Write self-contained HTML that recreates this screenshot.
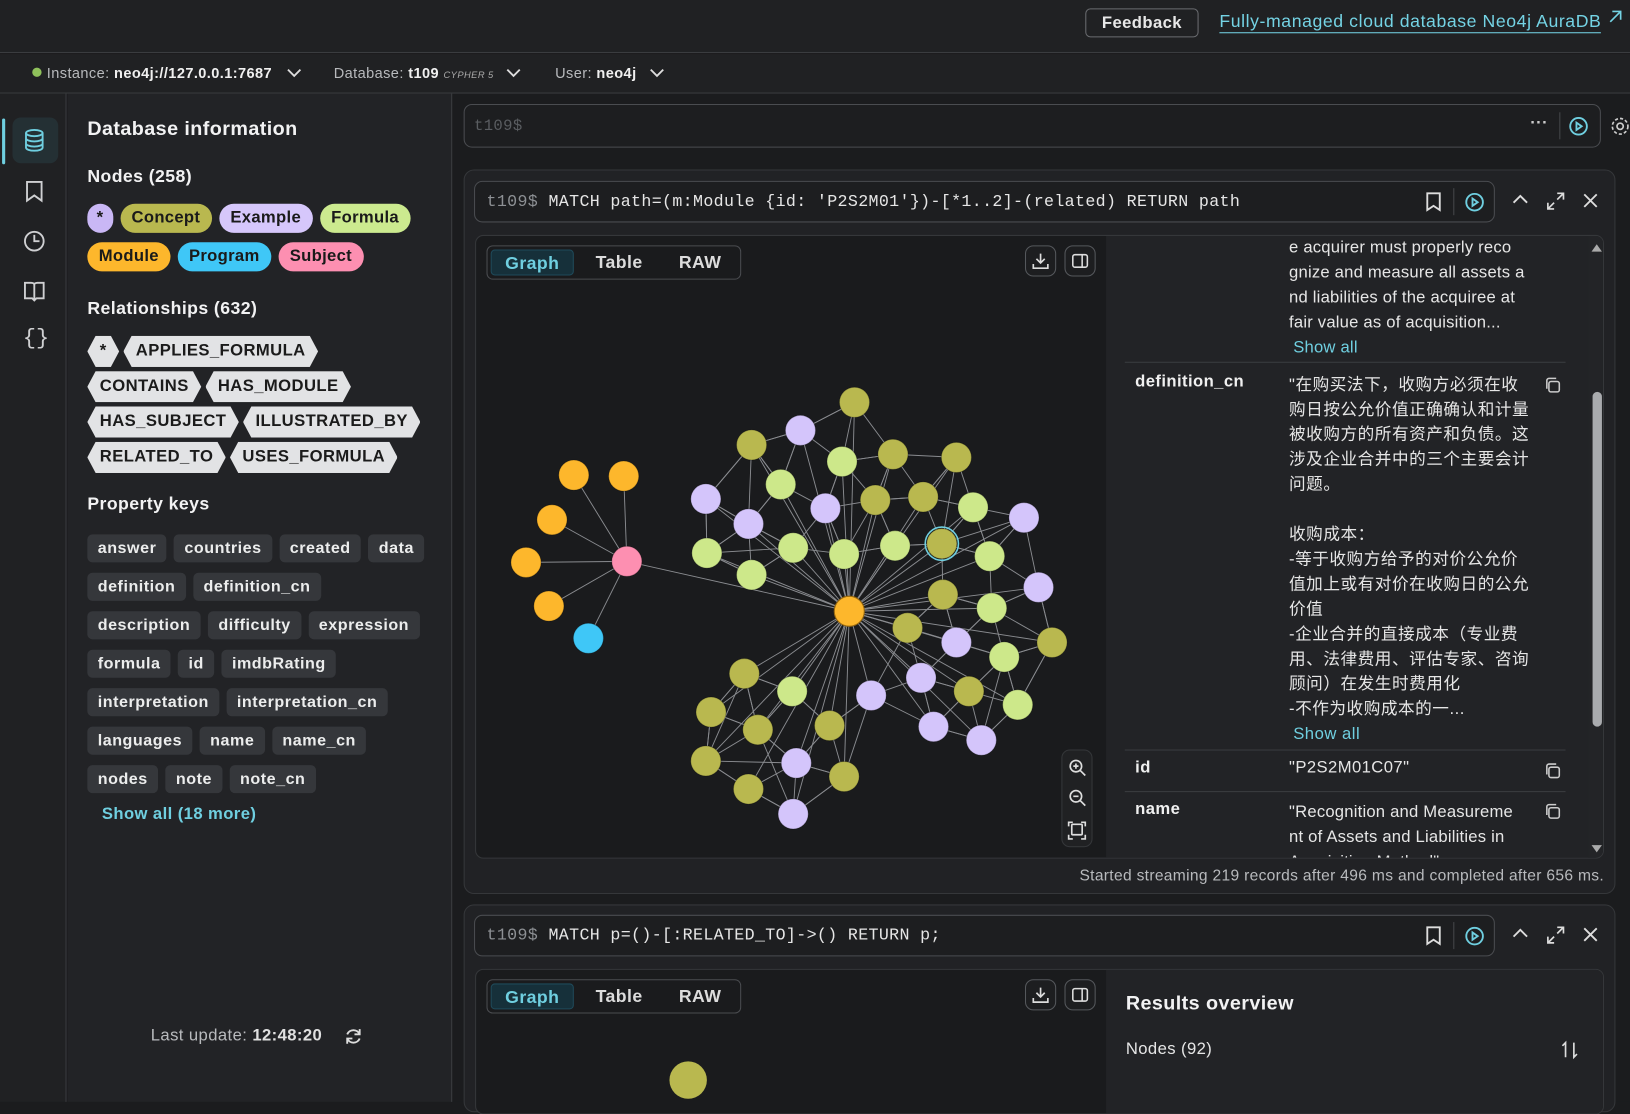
<!DOCTYPE html>
<html><head><meta charset="utf-8"><style>
*{box-sizing:border-box;margin:0;padding:0}
html,body{width:1630px;height:1072px;overflow:hidden;background:#1b1c1e}
#w{position:absolute;left:0;top:0;width:1568px;height:1060px;transform:scale(1.03954);transform-origin:0 0;font-family:"Liberation Sans","Noto Sans CJK SC",sans-serif;color:#e8e9ea;background:#1b1c1e;letter-spacing:0.4px}
.a{position:absolute}
.top{left:0;top:0;width:1568px;height:51px;background:#202123;border-bottom:1px solid #3a3c3f}
.bar2{left:0;top:52px;width:1568px;height:38px;background:#202123;border-bottom:1px solid #3a3c3f;font-size:14px;color:#b8babd}
.bar2 b{color:#f0f0f0;font-weight:bold}
.side{left:0;top:90px;width:64px;height:970px;background:#202123;border-right:1px solid #3a3c3f}
.panel{left:65px;top:90px;width:370px;height:970px;background:#222326;border-right:1px solid #3a3c3f}
.h{font-weight:bold;font-size:17px;color:#f2f2f3}
.lbl{display:inline-block;border-radius:14px;font-weight:bold;font-size:16px;color:#1a1a1a;height:28px;line-height:28px;padding:0 11px;margin:0 7px 9px 0;letter-spacing:0.3px}
.rel{display:inline-block;background:#e2e3e5;color:#1b1b1b;font-weight:bold;font-size:16px;height:30px;line-height:30px;padding:0 12px;margin:0 4px 4px 0;letter-spacing:0.4px;clip-path:polygon(8px 0,calc(100% - 8px) 0,100% 50%,calc(100% - 8px) 100%,8px 100%,0 50%)}
.pk{display:inline-block;background:#35373b;color:#eceded;font-weight:bold;font-size:15.5px;height:27px;line-height:27px;padding:0 10px;border-radius:5px;margin:0 7px 10px 0;letter-spacing:0.5px}
.card{background:#212225;border:1px solid #35373a;border-radius:10px}
.q{background:#1d1e20;border:1px solid #4a4c50;border-radius:8px;font-family:"Liberation Mono",monospace;font-size:16px;color:#e6e6e6;letter-spacing:0.33px}
.q span{color:#8d9094}
.res{border:1px solid #35373a;border-radius:8px;background:#1a1b1d;overflow:hidden}
.tabs{border:1px solid #4a4c50;border-radius:6px;height:33px;font-weight:bold;font-size:17px;color:#dcdcdc}
.tabs div{position:absolute;top:3px;height:25px;line-height:25px}
.ib{border:1px solid #55585c;border-radius:8px;width:30px;height:30px;background:#1d1e20}
.props{background:#222326;font-size:16px;color:#e6e6e6}
.k{font-weight:bold;color:#f0f0f0}
.cp{width:18px;height:18px}
.cy{color:#6fcfe0}
svg{overflow:visible}
</style></head><body><div id="w">
<div class="a top"></div>
<div class="a" style="left:1044px;top:8px;width:109px;height:28px;border:1px solid #6a6c70;border-radius:5px;text-align:center;line-height:27px;font-weight:bold;font-size:16px;color:#e8e8e8">Feedback</div>
<div class="a" style="left:1173px;top:10px;font-size:17px;color:#74d3e4;border-bottom:1.5px solid #74d3e4;line-height:21px;letter-spacing:0.55px">Fully-managed cloud database Neo4j AuraDB</div>
<svg class="a" style="left:1547px;top:9px" width="14" height="14"><path d="M2 12L12 2M4 2h8v8" stroke="#74d3e4" stroke-width="1.6" fill="none"/></svg>
<div class="a bar2">
 <div class="a" style="left:31px;top:13px;width:9px;height:9px;border-radius:50%;background:#8fc15b"></div>
 <div class="a" style="left:45px;top:10px">Instance: <b>neo4j://127.0.0.1:7687</b></div>
 <svg class="a" style="left:276px;top:13px" width="14" height="10"><path d="M1 2l6 6 6-6" stroke="#ddd" stroke-width="1.8" fill="none"/></svg>
 <div class="a" style="left:321px;top:10px">Database: <b>t109</b> <i style="font-size:9px;color:#aaa">CYPHER 5</i></div>
 <svg class="a" style="left:487px;top:13px" width="14" height="10"><path d="M1 2l6 6 6-6" stroke="#ddd" stroke-width="1.8" fill="none"/></svg>
 <div class="a" style="left:534px;top:10px">User: <b>neo4j</b></div>
 <svg class="a" style="left:625px;top:13px" width="14" height="10"><path d="M1 2l6 6 6-6" stroke="#ddd" stroke-width="1.8" fill="none"/></svg>
</div>
<div class="a side">
 <div class="a" style="left:2px;top:24px;width:3px;height:44px;background:#6fcfe0;border-radius:2px"></div>
 <div class="a" style="left:12px;top:23px;width:44px;height:44px;background:#243034;border-radius:8px"></div>
 <svg class="a" style="left:21px;top:33px" width="24" height="24" fill="none" stroke="#6fcfe0" stroke-width="1.8"><ellipse cx="12" cy="5" rx="8" ry="3"/><path d="M4 5v14c0 1.7 3.6 3 8 3s8-1.3 8-3V5M4 10c0 1.7 3.6 3 8 3s8-1.3 8-3M4 15c0 1.7 3.6 3 8 3s8-1.3 8-3"/></svg>
 <svg class="a" style="left:23px;top:83px" width="20" height="22" fill="none" stroke="#cfd0d2" stroke-width="1.8"><path d="M3 2h14v18l-7-5-7 5z"/></svg>
 <svg class="a" style="left:22px;top:131px" width="22" height="22" fill="none" stroke="#cfd0d2" stroke-width="1.8"><circle cx="11" cy="11" r="9"/><path d="M11 5v6h5"/></svg>
 <svg class="a" style="left:22px;top:180px" width="22" height="20" fill="none" stroke="#cfd0d2" stroke-width="1.8"><path d="M11 4v15M2 2h6c2 0 3 1 3 2 0-1 1-2 3-2h6v15h-7l-2 2-2-2H2z"/></svg>
 <div class="a" style="left:22px;top:225px;font-size:21px;color:#cfd0d2;font-family:'Liberation Mono',monospace;letter-spacing:0">{}</div>
</div>
<div class="a panel">
 <div class="a h" style="left:19px;top:24px;font-size:19px">Database information</div>
 <div class="a h" style="left:19px;top:70px">Nodes (258)</div>
 <div class="a" style="left:19px;top:106px;width:345px">
  <span class="lbl" style="background:#c9b7f5;padding:0 9px">*</span><span class="lbl" style="background:#b9b84f">Concept</span><span class="lbl" style="background:#d6c7fb">Example</span><span class="lbl" style="background:#ccea8f">Formula</span><br>
  <span class="lbl" style="background:#fdb72c">Module</span><span class="lbl" style="background:#3fc7f7">Program</span><span class="lbl" style="background:#fd8fb1">Subject</span>
 </div>
 <div class="a h" style="left:19px;top:197px">Relationships (632)</div>
 <div class="a" style="left:19px;top:233px;width:345px">
  <span class="rel">*</span><span class="rel">APPLIES_FORMULA</span><br><span class="rel">CONTAINS</span><span class="rel">HAS_MODULE</span><br><span class="rel">HAS_SUBJECT</span><span class="rel">ILLUSTRATED_BY</span><br><span class="rel">RELATED_TO</span><span class="rel">USES_FORMULA</span>
 </div>
 <div class="a h" style="left:19px;top:385px">Property keys</div>
 <div class="a" style="left:19px;top:424px;width:350px;white-space:nowrap">
  <span class="pk">answer</span><span class="pk">countries</span><span class="pk">created</span><span class="pk">data</span><br><span class="pk">definition</span><span class="pk">definition_cn</span><br><span class="pk">description</span><span class="pk">difficulty</span><span class="pk">expression</span><br><span class="pk">formula</span><span class="pk">id</span><span class="pk">imdbRating</span><br><span class="pk">interpretation</span><span class="pk">interpretation_cn</span><br><span class="pk">languages</span><span class="pk">name</span><span class="pk">name_cn</span><br><span class="pk">nodes</span><span class="pk">note</span><span class="pk">note_cn</span>
 </div>
 <div class="a cy" style="left:33px;top:685px;font-weight:bold;font-size:16px">Show all (18 more)</div>
 <div class="a" style="left:80px;top:898px;font-size:16px;color:#b8babd">Last update: <b style="color:#e0e0e0">12:48:20</b></div>
 <svg class="a" style="left:266px;top:898px" width="18" height="18" fill="none" stroke="#ddd" stroke-width="1.8"><path d="M15 7a6.5 6.5 0 0 0-12 0M3 11a6.5 6.5 0 0 0 12 0M15 2v5h-5M3 16v-5h5"/></svg>
</div>
<div class="a q" style="left:446px;top:100px;width:1094px;height:42px"><span class="a" style="left:9px;top:12px;color:#5a5d61;font-size:15px">t109$</span></div>
<div class="a" style="left:1472px;top:110px;color:#ccc;font-weight:bold">···</div>
<div class="a" style="left:1500px;top:108px;width:1px;height:26px;background:#45474b"></div>
<svg class="a" style="left:1509px;top:112px" width="19" height="19" fill="none" stroke="#6fcfe0" stroke-width="1.8"><circle cx="9.5" cy="9.5" r="8"/><path d="M7.5 6v7l5-3.5z"/></svg>
<svg class="a" style="left:1549px;top:112px" width="19" height="19" fill="none" stroke="#ccc" stroke-width="1.6"><circle cx="9.5" cy="9.5" r="3"/><circle cx="9.5" cy="9.5" r="7.5" stroke-dasharray="3 2"/></svg>
<div class="a card" style="left:446px;top:163px;width:1108px;height:697px"></div>
<div class="a q" style="left:456px;top:174px;width:982px;height:40px"><div class="a" style="left:11px;top:10px;white-space:pre"><span>t109$</span> MATCH path=(m:Module {id: 'P2S2M01'})-[*1..2]-(related) RETURN path</div></div>
<svg class="a" style="left:1371px;top:185px" width="16" height="18" fill="none" stroke="#ddd" stroke-width="1.8"><path d="M2 1h12v16l-6-4-6 4z"/></svg>
<div class="a" style="left:1398px;top:181px;width:1px;height:26px;background:#45474b"></div>
<svg class="a" style="left:1409px;top:185px" width="19" height="19" fill="none" stroke="#6fcfe0" stroke-width="1.8"><circle cx="9.5" cy="9.5" r="8"/><path d="M7.5 6v7l5-3.5z"/></svg>
<svg class="a" style="left:1455px;top:187px" width="15" height="10" fill="none" stroke="#ddd" stroke-width="1.8"><path d="M1 8l6.5-6.5L14 8"/></svg>
<svg class="a" style="left:1488px;top:185px" width="17" height="17" fill="none" stroke="#ddd" stroke-width="1.6"><path d="M10 1h6v6M16 1l-6 6M7 16H1v-6M1 16l6-6"/></svg>
<svg class="a" style="left:1523px;top:186px" width="14" height="14" fill="none" stroke="#ddd" stroke-width="1.8"><path d="M1 1l12 12M13 1L1 13"/></svg>
<div class="a res" style="left:457px;top:226px;width:1086px;height:600px">
 <div class="a props" style="left:606px;top:0;width:480px;height:600px">
  <div class="a" style="left:176px;top:0;width:260px;line-height:24px;letter-spacing:0.2px">e acquirer must properly reco<br>gnize and measure all assets a<br>nd liabilities of the acquiree at<br>fair value as of acquisition...<br><span class="cy" style="margin-left:4px">Show all</span></div>
  <div class="a" style="left:18px;top:121px;width:424px;height:1px;background:#3a3c40"></div>
  <div class="a k" style="left:28px;top:132px">definition_cn</div>
  <div class="a" style="left:176px;top:132px;width:240px;line-height:24px;font-size:16px;letter-spacing:0.5px">"在购买法下，收购方必须在收<br>购日按公允价值正确确认和计量<br>被收购方的所有资产和负债。这<br>涉及企业合并中的三个主要会计<br>问题。<br><br>收购成本：<br>-等于收购方给予的对价公允价<br>值加上或有对价在收购日的公允<br>价值<br>-企业合并的直接成本（专业费<br>用、法律费用、评估专家、咨询<br>顾问）在发生时费用化<br>-不作为收购成本的一...<br><span class="cy" style="margin-left:4px">Show all</span></div>
  <svg class="a cp" style="left:421px;top:135px" fill="none" stroke="#ccc" stroke-width="1.5"><rect x="5" y="5" width="10" height="10" rx="2"/><path d="M3 12V4c0-1 1-2 2-2h7"/></svg>
  <div class="a" style="left:18px;top:494px;width:424px;height:1px;background:#3a3c40"></div>
  <div class="a k" style="left:28px;top:503px">id</div>
  <div class="a" style="left:176px;top:503px">"P2S2M01C07"</div>
  <svg class="a cp" style="left:421px;top:506px" fill="none" stroke="#ccc" stroke-width="1.5"><rect x="5" y="5" width="10" height="10" rx="2"/><path d="M3 12V4c0-1 1-2 2-2h7"/></svg>
  <div class="a" style="left:18px;top:534px;width:424px;height:1px;background:#3a3c40"></div>
  <div class="a k" style="left:28px;top:543px">name</div>
  <div class="a" style="left:176px;top:543px;width:260px;line-height:24px;letter-spacing:0.2px">"Recognition and Measureme<br>nt of Assets and Liabilities in<br>Acquisition Method"</div>
  <svg class="a cp" style="left:421px;top:545px" fill="none" stroke="#ccc" stroke-width="1.5"><rect x="5" y="5" width="10" height="10" rx="2"/><path d="M3 12V4c0-1 1-2 2-2h7"/></svg>
  <div class="a" style="left:464px;top:0;width:16px;height:600px;background:#232427"></div>
  <div class="a" style="left:467px;top:8px;width:0;height:0;border-left:5px solid transparent;border-right:5px solid transparent;border-bottom:7px solid #aaa"></div>
  <div class="a" style="left:467px;top:586px;width:0;height:0;border-left:5px solid transparent;border-right:5px solid transparent;border-top:7px solid #aaa"></div>
  <div class="a" style="left:468px;top:150px;width:9px;height:322px;background:#a9abae;border-radius:5px"></div>
 </div>
 <div class="a tabs" style="left:10px;top:9px;width:245px"><div style="left:3px;width:80px;background:#16303a;border:1px solid #1f4a5a;border-radius:4px;color:#6fcfe0;text-align:center">Graph</div><div style="left:104px">Table</div><div style="left:184px">RAW</div></div>
 <div class="a ib" style="left:528px;top:9px"></div>
 <svg class="a" style="left:535px;top:16px" width="16" height="16" fill="none" stroke="#ddd" stroke-width="1.6"><path d="M8 1v9M4 6l4 4 4-4M1 11v4h14v-4"/></svg>
 <div class="a ib" style="left:566px;top:9px"></div>
 <svg class="a" style="left:573px;top:17px" width="16" height="14" fill="none" stroke="#ddd" stroke-width="1.5"><rect x="1" y="1" width="14" height="12" rx="2"/><path d="M10 1v12"/></svg>
 <div class="a" style="left:563px;top:494px;width:30px;height:94px;background:#202123;border:1px solid #35373a;border-radius:8px"></div>
 <svg class="a" style="left:570px;top:503px" width="18" height="78" fill="none" stroke="#ddd" stroke-width="1.6"><circle cx="7" cy="7" r="5.5"/><path d="M11 11l5 5M4.5 7h5M7 4.5v5"/><circle cx="7" cy="36" r="5.5"/><path d="M11 40l5 5M4.5 36h5"/><rect x="3" y="63" width="10" height="10" rx="1"/><path d="M0 65v-4h4M12 61h4v4M16 73v4h-4M4 77H0v-4"/></svg>
</div>
<svg id="g" class="a" style="left:0;top:0" width="1568" height="1032"></svg>
<div class="a" style="left:900px;width:643px;text-align:right;top:834px;font-size:15px;color:#b8babd;letter-spacing:0.3px">Started streaming 219 records after 496 ms and completed after 656 ms.</div>
<div class="a card" style="left:446px;top:870px;width:1108px;height:200px"></div>
<div class="a q" style="left:456px;top:880px;width:982px;height:40px"><div class="a" style="left:11px;top:10px;white-space:pre"><span>t109$</span> MATCH p=()-[:RELATED_TO]-&gt;() RETURN p;</div></div>
<svg class="a" style="left:1371px;top:891px" width="16" height="18" fill="none" stroke="#ddd" stroke-width="1.8"><path d="M2 1h12v16l-6-4-6 4z"/></svg>
<div class="a" style="left:1398px;top:887px;width:1px;height:26px;background:#45474b"></div>
<svg class="a" style="left:1409px;top:891px" width="19" height="19" fill="none" stroke="#6fcfe0" stroke-width="1.8"><circle cx="9.5" cy="9.5" r="8"/><path d="M7.5 6v7l5-3.5z"/></svg>
<svg class="a" style="left:1455px;top:893px" width="15" height="10" fill="none" stroke="#ddd" stroke-width="1.8"><path d="M1 8l6.5-6.5L14 8"/></svg>
<svg class="a" style="left:1488px;top:891px" width="17" height="17" fill="none" stroke="#ddd" stroke-width="1.6"><path d="M10 1h6v6M16 1l-6 6M7 16H1v-6M1 16l6-6"/></svg>
<svg class="a" style="left:1523px;top:892px" width="14" height="14" fill="none" stroke="#ddd" stroke-width="1.8"><path d="M1 1l12 12M13 1L1 13"/></svg>
<div class="a res" style="left:457px;top:932px;width:1086px;height:140px">
 <div class="a props" style="left:606px;top:0;width:480px;height:140px">
  <div class="a" style="left:19px;top:22px;font-weight:bold;font-size:19px;color:#f2f2f3">Results overview</div>
  <div class="a" style="left:19px;top:68px;font-size:16px">Nodes (92)</div>
  <svg class="a" style="left:437px;top:68px" width="18" height="18" fill="none" stroke="#ddd" stroke-width="1.6"><path d="M5 16V2L2 5M13 2v14l3-3"/></svg>
 </div>
 <div class="a tabs" style="left:10px;top:9px;width:245px"><div style="left:3px;width:80px;background:#16303a;border:1px solid #1f4a5a;border-radius:4px;color:#6fcfe0;text-align:center">Graph</div><div style="left:104px">Table</div><div style="left:184px">RAW</div></div>
 <div class="a ib" style="left:528px;top:9px"></div>
 <svg class="a" style="left:535px;top:16px" width="16" height="16" fill="none" stroke="#ddd" stroke-width="1.6"><path d="M8 1v9M4 6l4 4 4-4M1 11v4h14v-4"/></svg>
 <div class="a ib" style="left:566px;top:9px"></div>
 <svg class="a" style="left:573px;top:17px" width="16" height="14" fill="none" stroke="#ddd" stroke-width="1.5"><rect x="1" y="1" width="14" height="12" rx="2"/><path d="M10 1v12"/></svg>
 <div class="a" style="left:186px;top:88px;width:36px;height:36px;border-radius:50%;background:#b9b84f"></div>
</div>
<script>
var O='#fdb72c',C='#b9b84f',F='#cde88a',E='#d4c5fb';
var L=[[552,457,O],[600,458,O],[531,500,O],[506,541,O],[528,583,O],[566,614,'#3fc7f7']];
var P=[603,540,'#fd8fb1'],Z=[817,588,O];
var N=[[822,387,C],[723,428,C],[859,437,C],[920,440,C],[842,481,C],[888,478,C],[906,523,C],[907,572,C],[873,604,C],[1012,618,C],[932,665,C],[716,648,C],[684,685,C],[729,702,C],[798,698,C],[679,732,C],[720,759,C],[812,747,C],
[810,444,F],[751,466,F],[936,488,F],[680,532,F],[763,527,F],[812,533,F],[861,525,F],[952,535,F],[723,553,F],[954,585,F],[966,632,F],[979,678,F],[762,665,F],
[770,414,E],[679,480,E],[720,504,E],[794,489,E],[985,498,E],[999,565,E],[920,618,E],[886,652,E],[838,669,E],[898,699,E],[944,712,E],[766,734,E],[763,783,E]];
var s='';function ln(a,b){s+='<line x1="'+a[0]+'" y1="'+a[1]+'" x2="'+b[0]+'" y2="'+b[1]+'" stroke="#8a8c90" stroke-width="0.9"/>';}
L.forEach(function(n){ln(P,n)});ln(P,Z);
N.forEach(function(n,i){ln(Z,n);var d=N.map(function(m,j){return [Math.hypot(m[0]-n[0],m[1]-n[1]),j]}).sort(function(a,b){return a[0]-b[0]});ln(n,N[d[1][1]]);ln(n,N[d[2][1]]);ln(n,N[d[3][1]]);if(i%2)ln(n,N[d[4][1]]);});
function nd(n){s+='<circle cx="'+n[0]+'" cy="'+n[1]+'" r="14.5" fill="'+n[2]+'" stroke="rgba(0,0,0,.25)"/>';}
L.forEach(nd);nd(P);N.forEach(nd);nd(Z);
s+='<circle cx="906" cy="523" r="16" fill="none" stroke="#6fcfe0" stroke-width="1.5"/>';
s+='<circle cx="817" cy="588" r="14.5" fill="none" stroke="#9a6a10" stroke-width="1"/>';
document.getElementById('g').innerHTML=s;
</script>
</div></body></html>
